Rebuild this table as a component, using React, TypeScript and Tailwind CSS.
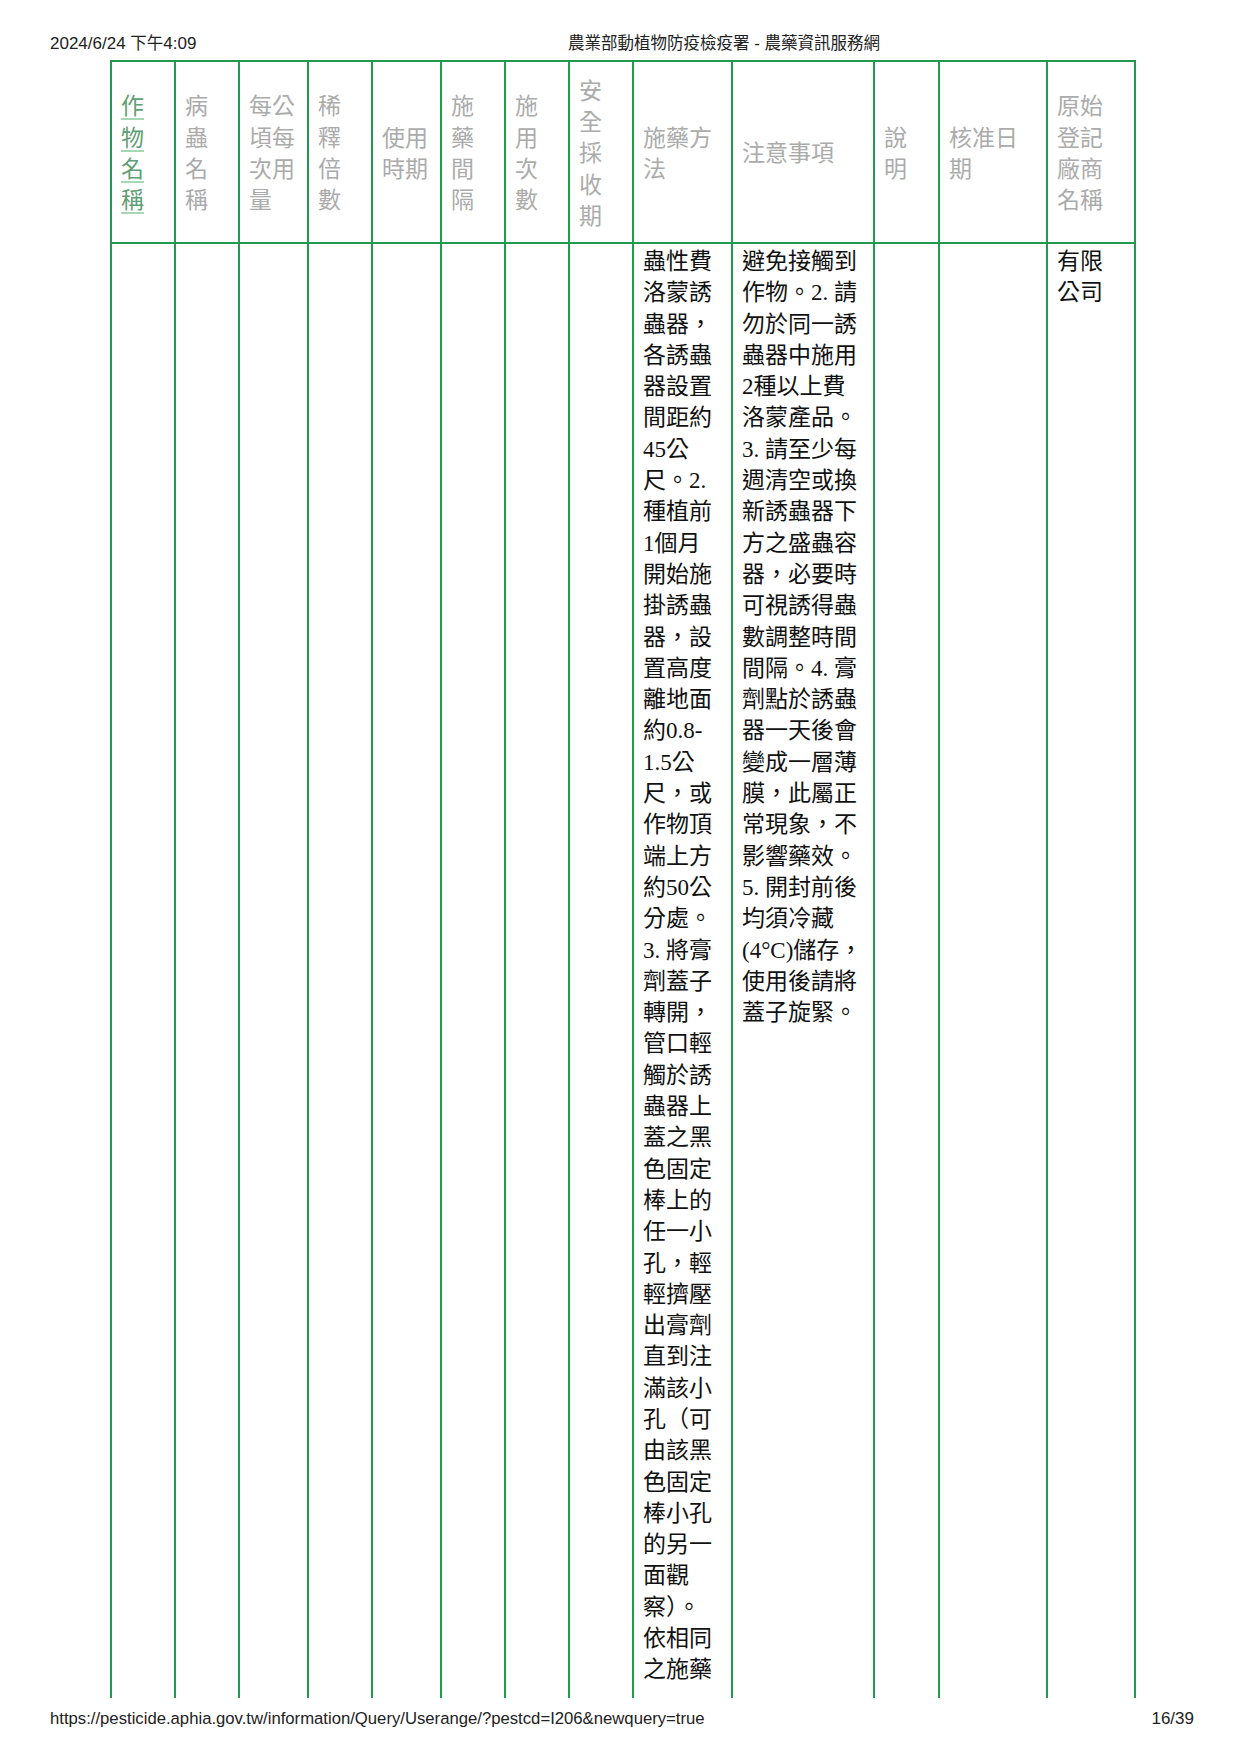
const LINE = "border-[#21994f]";

const COLS =
  "grid grid-cols-[64px_64px_69px_64px_69px_64px_64px_64px_99px_142px_65px_108px_88px]";

const HEADERS: string[][] = [
  ["作", "物", "名", "稱"],
  ["病", "蟲", "名", "稱"],
  ["每公", "頃每", "次用", "量"],
  ["稀", "釋", "倍", "數"],
  ["使用", "時期"],
  ["施", "藥", "間", "隔"],
  ["施", "用", "次", "數"],
  ["安", "全", "採", "收", "期"],
  ["施藥方", "法"],
  ["注意事項"],
  ["說", "明"],
  ["核准日", "期"],
  ["原始", "登記", "廠商", "名稱"],
];

const METHOD = [
  "蟲性費",
  "洛蒙誘",
  "蟲器，",
  "各誘蟲",
  "器設置",
  "間距約",
  "45公",
  "尺。2.",
  "種植前",
  "1個月",
  "開始施",
  "掛誘蟲",
  "器，設",
  "置高度",
  "離地面",
  "約0.8-",
  "1.5公",
  "尺，或",
  "作物頂",
  "端上方",
  "約50公",
  "分處。",
  "3. 將膏",
  "劑蓋子",
  "轉開，",
  "管口輕",
  "觸於誘",
  "蟲器上",
  "蓋之黑",
  "色固定",
  "棒上的",
  "任一小",
  "孔，輕",
  "輕擠壓",
  "出膏劑",
  "直到注",
  "滿該小",
  "孔（可",
  "由該黑",
  "色固定",
  "棒小孔",
  "的另一",
  "面觀",
  "察）。",
  "依相同",
  "之施藥",
];

const NOTES = [
  "避免接觸到",
  "作物。2. 請",
  "勿於同一誘",
  "蟲器中施用",
  "2種以上費",
  "洛蒙產品。",
  "3. 請至少每",
  "週清空或換",
  "新誘蟲器下",
  "方之盛蟲容",
  "器，必要時",
  "可視誘得蟲",
  "數調整時間",
  "間隔。4. 膏",
  "劑點於誘蟲",
  "器一天後會",
  "變成一層薄",
  "膜，此屬正",
  "常現象，不",
  "影響藥效。",
  "5. 開封前後",
  "均須冷藏",
  "(4°C)儲存，",
  "使用後請將",
  "蓋子旋緊。",
];

const COMPANY = ["有限", "公司"];

function Lines({ lines }: { lines: string[] }) {
  return (
    <>
      {lines.map((l, i) => (
        <div key={i} className="whitespace-nowrap">
          {l}
        </div>
      ))}
    </>
  );
}

function HeaderCell({ lines, link }: { lines: string[]; link?: boolean }) {
  return (
    <div
      className={`flex items-center border-r-2 border-b-2 ${LINE} px-[9px] pt-[4px] ${
        link ? "text-[#5f9f74]" : "text-[#ababab]"
      }`}
    >
      <div>
        {lines.map((l, i) => (
          <div key={i} className="whitespace-nowrap">
            <span
              className={
                link
                  ? "underline decoration-[#a6d8b5] decoration-2 underline-offset-[4px]"
                  : ""
              }
            >
              {l}
            </span>
          </div>
        ))}
      </div>
    </div>
  );
}

function BodyCell({ lines }: { lines?: string[] }) {
  return (
    <div className={`overflow-hidden border-r-2 ${LINE} px-[9px] pt-[2px] text-[#111]`}>
      {lines ? <Lines lines={lines} /> : null}
    </div>
  );
}

export default function App() {
  const sans = "font-['Liberation_Sans','Noto_Sans_CJK_TC',sans-serif]";

  return (
    <div lang="zh-TW" className="flex h-[1755px] w-[1241px] flex-col overflow-hidden bg-white">
      {/* print header */}
      <div className={`flex pt-[33px] pl-[50px] text-[17px] leading-[20px] text-[#222] ${sans}`}>
        <span className="w-[518px]">
          2024/6/24 <span className="text-[16.5px]">下午</span>4:09
        </span>
        <span className="text-[16.5px]">
          農業部動植物防疫檢疫署<span className="text-[17px]"> - </span>農藥資訊服務網
        </span>
      </div>

      {/* table */}
      <div
        className={`mt-[6px] ml-[110px] w-[1026px] border-t-2 border-l-2 ${LINE} font-['Liberation_Serif','Noto_Sans_CJK_TC','Noto_Sans_TC',serif] text-[23px] leading-[31.3px]`}
      >
        <div className={`${COLS} h-[182px]`}>
          {HEADERS.map((h, i) => (
            <HeaderCell key={i} lines={h} link={i === 0} />
          ))}
        </div>
        <div className={`${COLS} h-[1454px]`}>
          <BodyCell />
          <BodyCell />
          <BodyCell />
          <BodyCell />
          <BodyCell />
          <BodyCell />
          <BodyCell />
          <BodyCell />
          <BodyCell lines={METHOD} />
          <BodyCell lines={NOTES} />
          <BodyCell />
          <BodyCell />
          <BodyCell lines={COMPANY} />
        </div>
      </div>

      {/* print footer */}
      <div
        className={`mt-[11px] flex justify-between pr-[47px] pl-[50px] text-[17px] leading-[20px] text-[#222] ${sans}`}
      >
        <span className="text-[16.7px]">
          https://pesticide.aphia.gov.tw/information/Query/Userange/?pestcd=I206&amp;newquery=true
        </span>
        <span>16/39</span>
      </div>
    </div>
  );
}
